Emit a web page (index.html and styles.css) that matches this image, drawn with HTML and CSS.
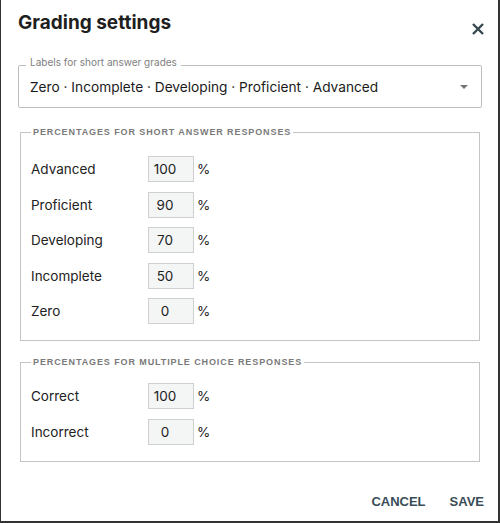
FILE: index.html
```html
<!DOCTYPE html>
<html lang="en">
<head>
<meta charset="utf-8">
<title>Grading settings</title>
<link rel="stylesheet" href="styles.css">
</head>
<body>
<div class="dialog">
  <div class="header">
    <h1 class="title">Grading settings</h1>
    <button class="close" aria-label="Close">
      <svg width="12" height="12" viewBox="0 0 12 12"><path d="M1 1 L11 11 M11 1 L1 11" stroke="#37474f" stroke-width="2.4" stroke-linecap="butt" fill="none"/></svg>
    </button>
  </div>

  <fieldset class="select">
    <legend class="select-legend">Labels for short answer grades</legend>
    <div class="select-row">
      <span class="select-value">Zero · Incomplete · Developing · Proficient · Advanced</span>
      <svg class="arrow" width="8" height="4" viewBox="0 0 8 4"><path d="M0 0 L8 0 L4 4 Z" fill="#757575"/></svg>
    </div>
  </fieldset>

  <fieldset class="group">
    <legend class="group-legend">Percentages for short answer responses</legend>
    <div class="rows">
      <div class="row"><span class="label">Advanced</span><span class="input">100</span><span class="pct">%</span></div>
      <div class="row"><span class="label">Proficient</span><span class="input">90</span><span class="pct">%</span></div>
      <div class="row"><span class="label">Developing</span><span class="input">70</span><span class="pct">%</span></div>
      <div class="row"><span class="label">Incomplete</span><span class="input">50</span><span class="pct">%</span></div>
      <div class="row"><span class="label">Zero</span><span class="input">0</span><span class="pct">%</span></div>
    </div>
  </fieldset>

  <fieldset class="group group-mc">
    <legend class="group-legend">Percentages for multiple choice responses</legend>
    <div class="rows">
      <div class="row"><span class="label">Correct</span><span class="input">100</span><span class="pct">%</span></div>
      <div class="row"><span class="label">Incorrect</span><span class="input">0</span><span class="pct">%</span></div>
    </div>
  </fieldset>

  <div class="footer">
    <button class="btn">CANCEL</button>
    <button class="btn">SAVE</button>
  </div>
</div>
</body>
</html>
```

FILE: styles.css
```css
* { box-sizing: border-box; }
html, body { margin: 0; padding: 0; background: #fff; }
body { font-family: Inter, "Open Sans", sans-serif; color: #222; }

.dialog {
  width: 500px;
  height: 523px;
  border-left: 1px solid #333;
  border-right: 2px solid #333;
  border-bottom: 2px solid #333;
  display: flex;
  flex-direction: column;
}

.header {
  display: flex;
  justify-content: space-between;
  align-items: center;
  height: 44px;
  padding: 0 14px 0 17px;
}
.title {
  margin: 0;
  font-size: 19px;
  font-weight: 700;
  line-height: 24px;
  color: #1f1f1f;
  padding-top: 1px;
}
.close {
  border: 0;
  background: none;
  padding: 0;
  width: 12px;
  height: 12px;
  margin-top: 13px;
  display: flex;
}

.select {
  margin: 12px 0 0 17px;
  width: 464px;
  border: 1px solid #bdbdbd;
  border-radius: 2px;
  padding: 2px 13px 10px 11px;
  min-inline-size: 0;
}
.select-legend {
  margin-left: -4px;
  padding: 0 4px 7px;
  font-size: 10px;
  line-height: 12px;
  color: #808080;
}
.select-row {
  display: flex;
  justify-content: space-between;
  align-items: center;
  height: 20px;
}
.select-value {
  font-size: 13.7px;
  line-height: 20px;
  color: #1a1a1a;
}
.arrow { display: block; }

.group {
  margin: 19px 0 0 19px;
  width: 460px;
  border: 1px solid #c4c4c4;
  padding: 18px 10px 16px 10px;
  min-inline-size: 0;
}
.group-mc { margin-top: 16px; padding-top: 15px; padding-bottom: 16px; }
.group-legend {
  padding: 0 2px;
  font-family: "Liberation Sans", Arial, sans-serif;
  font-weight: 700;
  font-size: 9px;
  line-height: 11px;
  letter-spacing: 0.9px;
  text-transform: uppercase;
  color: #7a7a7a;
}
.rows {
  display: flex;
  flex-direction: column;
  gap: 9.5px;
}
.row {
  display: flex;
  align-items: center;
  height: 26px;
}
.label {
  width: 117px;
  font-size: 13.5px;
  color: #222;
}
.input {
  width: 46px;
  height: 26px;
  border: 1px solid #cfcfcf;
  background: #f4f5f5;
  font-size: 13.5px;
  line-height: 24px;
  text-align: center;
  padding-right: 12px;
  color: #222;
}
.pct {
  margin-left: 3px;
  font-size: 13.5px;
  color: #222;
}

.footer {
  margin-top: auto;
  display: flex;
  justify-content: flex-end;
  gap: 24px;
  padding: 0 14px 11px 0;
}
.btn {
  border: 0;
  background: none;
  padding: 0;
  font-family: "Liberation Sans", Arial, sans-serif;
  font-weight: 700;
  font-size: 13px;
  line-height: 16px;
  color: #3a4d57;
}
```
